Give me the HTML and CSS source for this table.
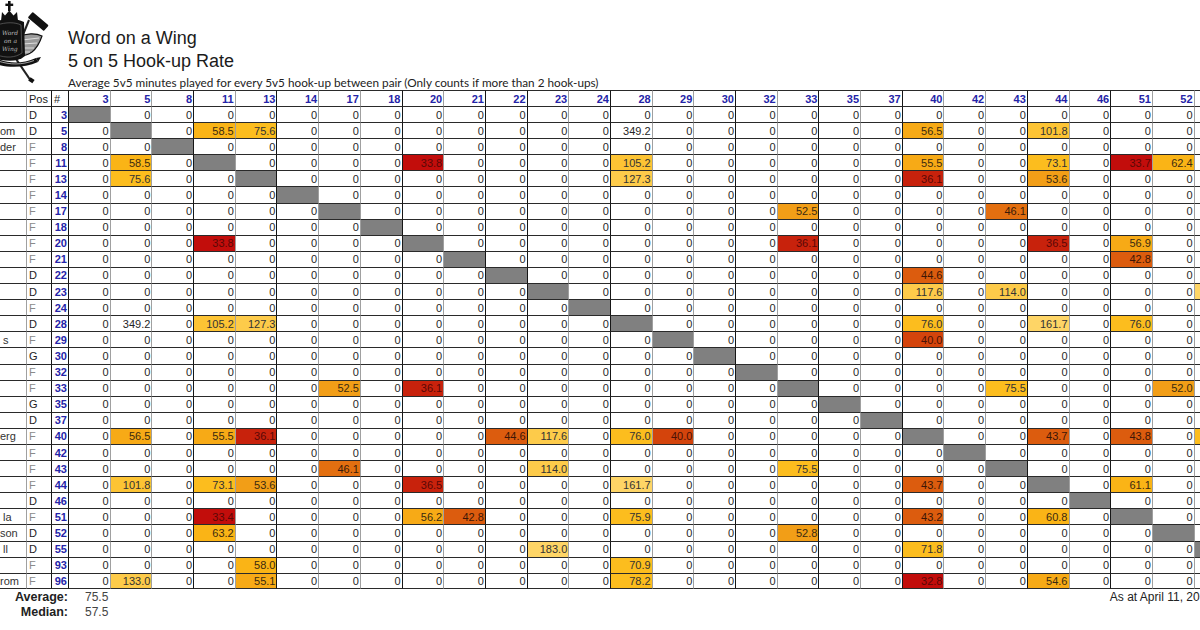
FILE: index.html
```html
<!DOCTYPE html>
<html lang="en">
<head>
<meta charset="utf-8">
<title>Word on a Wing - 5 on 5 Hook-up Rate</title>
<link rel="stylesheet" href="styles.css">
</head>
<body>
<div class="page">
  <header class="head">
    <svg class="logo" viewBox="0 0 50 86" aria-hidden="true">
      <rect x="8" y="1" width="2.6" height="10" fill="#111"/>
      <rect x="5.4" y="3.6" width="7.8" height="2.4" fill="#111"/>
      <path d="M1 21 L2 12 L5 15.5 L9.3 10.5 L13.5 15.5 L17 12 L18 21 Z" fill="#111"/>
      <path d="M29 20 L16 52" stroke="#222" stroke-width="2" fill="none"/>
      <path d="M14 56 L31 81" stroke="#222" stroke-width="2.2" fill="none"/>
      <rect x="29" y="78" width="5" height="4" fill="#111" transform="rotate(35 31 80)"/>
      <g transform="rotate(40 38 21)"><rect x="28" y="17.5" width="21" height="7.5" rx="1" fill="#111"/></g>
      <path d="M19 37 C26 33 36 33 42 36 C40 42 37 48 32 52 C28 55 23 56 19 56 Z" fill="#9a9a9a" stroke="#111" stroke-width="1.2"/>
      <path d="M22 40 L39 38 M22 44 L37 43 M22 48 L34 48 M22 52 L30 52" stroke="#eee" stroke-width="0.8" fill="none"/>
      <path d="M-6 22 C6 18 16 18 24 22 L25 56 C18 62 6 62 -6 58 Z" fill="#111"/>
      <path d="M-3 25 C6 22 15 22 21 25 L22 53 C15 58 6 58 -3 55 Z" fill="none" stroke="#777" stroke-width="0.6"/>
      <text x="2" y="35" class="crest">Word</text>
      <text x="4" y="43" class="crest">on a</text>
      <text x="2" y="51" class="crest">Wing</text>
      <path d="M-4 58 C8 64 22 64 36 58 L38 62 C24 68 8 68 -4 64 Z" fill="#111"/>
      <path d="M-2 61 C10 65 22 65 34 60.5" stroke="#ddd" stroke-width="0.7" fill="none"/>
      <path d="M36 58 L41 57 L38 62 Z" fill="#111"/>
    </svg>
    <div class="titles">
      <div class="t1">Word on a Wing</div>
      <div class="t2">5 on 5 Hook-up Rate</div>
      <div class="sub">Average 5v5 minutes played for every 5v5 hook-up between pair (Only counts if more than 2 hook-ups)</div>
    </div>
  </header>

  <table class="grid">
    <colgroup>
      <col class="c-name"><col class="c-pos"><col class="c-no">
      <col class="c-d"><col class="c-d"><col class="c-d"><col class="c-d"><col class="c-d"><col class="c-d"><col class="c-d"><col class="c-d"><col class="c-d"><col class="c-d"><col class="c-d"><col class="c-d"><col class="c-d"><col class="c-d"><col class="c-d"><col class="c-d"><col class="c-d"><col class="c-d"><col class="c-d"><col class="c-d"><col class="c-d"><col class="c-d"><col class="c-d"><col class="c-d"><col class="c-d"><col class="c-d"><col class="c-d"><col class="c-d">
    </colgroup>
    <tr class="hd"><td class="nm"></td><td class="ps">Pos</td><td class="hs">#</td><td class="hn">3</td><td class="hn">5</td><td class="hn">8</td><td class="hn">11</td><td class="hn">13</td><td class="hn">14</td><td class="hn">17</td><td class="hn">18</td><td class="hn">20</td><td class="hn">21</td><td class="hn">22</td><td class="hn">23</td><td class="hn">24</td><td class="hn">28</td><td class="hn">29</td><td class="hn">30</td><td class="hn">32</td><td class="hn">33</td><td class="hn">35</td><td class="hn">37</td><td class="hn">40</td><td class="hn">42</td><td class="hn">43</td><td class="hn">44</td><td class="hn">46</td><td class="hn">51</td><td class="hn">52</td><td class="hn"></td></tr>
    <tr><td class="nm"></td><td class="ps">D</td><td class="no">3</td><td class="x"></td><td>0</td><td>0</td><td>0</td><td>0</td><td>0</td><td>0</td><td>0</td><td>0</td><td>0</td><td>0</td><td>0</td><td>0</td><td>0</td><td>0</td><td>0</td><td>0</td><td>0</td><td>0</td><td>0</td><td>0</td><td>0</td><td>0</td><td>0</td><td>0</td><td>0</td><td>0</td><td></td></tr>
    <tr><td class="nm">om</td><td class="ps">D</td><td class="no">5</td><td>0</td><td class="x"></td><td>0</td><td class="k8">58.5</td><td class="k9">75.6</td><td>0</td><td>0</td><td>0</td><td>0</td><td>0</td><td>0</td><td>0</td><td>0</td><td>349.2</td><td>0</td><td>0</td><td>0</td><td>0</td><td>0</td><td>0</td><td class="k7">56.5</td><td>0</td><td>0</td><td class="k10">101.8</td><td>0</td><td>0</td><td>0</td><td></td></tr>
    <tr><td class="nm">der</td><td class="ps f">F</td><td class="no">8</td><td>0</td><td>0</td><td class="x"></td><td>0</td><td>0</td><td>0</td><td>0</td><td>0</td><td>0</td><td>0</td><td>0</td><td>0</td><td>0</td><td>0</td><td>0</td><td>0</td><td>0</td><td>0</td><td>0</td><td>0</td><td>0</td><td>0</td><td>0</td><td>0</td><td>0</td><td>0</td><td>0</td><td></td></tr>
    <tr><td class="nm"></td><td class="ps f">F</td><td class="no">11</td><td>0</td><td class="k8">58.5</td><td>0</td><td class="x"></td><td>0</td><td>0</td><td>0</td><td>0</td><td class="k1">33.8</td><td>0</td><td>0</td><td>0</td><td>0</td><td class="k10">105.2</td><td>0</td><td>0</td><td>0</td><td>0</td><td>0</td><td>0</td><td class="k7">55.5</td><td>0</td><td>0</td><td class="k9">73.1</td><td>0</td><td class="k1">33.7</td><td class="k8">62.4</td><td></td></tr>
    <tr><td class="nm"></td><td class="ps f">F</td><td class="no">13</td><td>0</td><td class="k9">75.6</td><td>0</td><td>0</td><td class="x"></td><td>0</td><td>0</td><td>0</td><td>0</td><td>0</td><td>0</td><td>0</td><td>0</td><td class="k11">127.3</td><td>0</td><td>0</td><td>0</td><td>0</td><td>0</td><td>0</td><td class="k2">36.1</td><td>0</td><td>0</td><td class="k6">53.6</td><td>0</td><td>0</td><td>0</td><td></td></tr>
    <tr><td class="nm"></td><td class="ps f">F</td><td class="no">14</td><td>0</td><td>0</td><td>0</td><td>0</td><td>0</td><td class="x"></td><td>0</td><td>0</td><td>0</td><td>0</td><td>0</td><td>0</td><td>0</td><td>0</td><td>0</td><td>0</td><td>0</td><td>0</td><td>0</td><td>0</td><td>0</td><td>0</td><td>0</td><td>0</td><td>0</td><td>0</td><td>0</td><td></td></tr>
    <tr><td class="nm"></td><td class="ps f">F</td><td class="no">17</td><td>0</td><td>0</td><td>0</td><td>0</td><td>0</td><td>0</td><td class="x"></td><td>0</td><td>0</td><td>0</td><td>0</td><td>0</td><td>0</td><td>0</td><td>0</td><td>0</td><td>0</td><td class="k6">52.5</td><td>0</td><td>0</td><td>0</td><td>0</td><td class="k5">46.1</td><td>0</td><td>0</td><td>0</td><td>0</td><td></td></tr>
    <tr><td class="nm"></td><td class="ps f">F</td><td class="no">18</td><td>0</td><td>0</td><td>0</td><td>0</td><td>0</td><td>0</td><td>0</td><td class="x"></td><td>0</td><td>0</td><td>0</td><td>0</td><td>0</td><td>0</td><td>0</td><td>0</td><td>0</td><td>0</td><td>0</td><td>0</td><td>0</td><td>0</td><td>0</td><td>0</td><td>0</td><td>0</td><td>0</td><td></td></tr>
    <tr><td class="nm"></td><td class="ps f">F</td><td class="no">20</td><td>0</td><td>0</td><td>0</td><td class="k1">33.8</td><td>0</td><td>0</td><td>0</td><td>0</td><td class="x"></td><td>0</td><td>0</td><td>0</td><td>0</td><td>0</td><td>0</td><td>0</td><td>0</td><td class="k2">36.1</td><td>0</td><td>0</td><td>0</td><td>0</td><td>0</td><td class="k2">36.5</td><td>0</td><td class="k7">56.9</td><td>0</td><td></td></tr>
    <tr><td class="nm"></td><td class="ps f">F</td><td class="no">21</td><td>0</td><td>0</td><td>0</td><td>0</td><td>0</td><td>0</td><td>0</td><td>0</td><td>0</td><td class="x"></td><td>0</td><td>0</td><td>0</td><td>0</td><td>0</td><td>0</td><td>0</td><td>0</td><td>0</td><td>0</td><td>0</td><td>0</td><td>0</td><td>0</td><td>0</td><td class="k4">42.8</td><td>0</td><td></td></tr>
    <tr><td class="nm"></td><td class="ps">D</td><td class="no">22</td><td>0</td><td>0</td><td>0</td><td>0</td><td>0</td><td>0</td><td>0</td><td>0</td><td>0</td><td>0</td><td class="x"></td><td>0</td><td>0</td><td>0</td><td>0</td><td>0</td><td>0</td><td>0</td><td>0</td><td>0</td><td class="k4">44.6</td><td>0</td><td>0</td><td>0</td><td>0</td><td>0</td><td>0</td><td></td></tr>
    <tr><td class="nm"></td><td class="ps">D</td><td class="no">23</td><td>0</td><td>0</td><td>0</td><td>0</td><td>0</td><td>0</td><td>0</td><td>0</td><td>0</td><td>0</td><td>0</td><td class="x"></td><td>0</td><td>0</td><td>0</td><td>0</td><td>0</td><td>0</td><td>0</td><td>0</td><td class="k11">117.6</td><td>0</td><td class="k11">114.0</td><td>0</td><td>0</td><td>0</td><td>0</td><td class="k12"></td></tr>
    <tr><td class="nm"></td><td class="ps f">F</td><td class="no">24</td><td>0</td><td>0</td><td>0</td><td>0</td><td>0</td><td>0</td><td>0</td><td>0</td><td>0</td><td>0</td><td>0</td><td>0</td><td class="x"></td><td>0</td><td>0</td><td>0</td><td>0</td><td>0</td><td>0</td><td>0</td><td>0</td><td>0</td><td>0</td><td>0</td><td>0</td><td>0</td><td>0</td><td></td></tr>
    <tr><td class="nm"></td><td class="ps">D</td><td class="no">28</td><td>0</td><td>349.2</td><td>0</td><td class="k10">105.2</td><td class="k11">127.3</td><td>0</td><td>0</td><td>0</td><td>0</td><td>0</td><td>0</td><td>0</td><td>0</td><td class="x"></td><td>0</td><td>0</td><td>0</td><td>0</td><td>0</td><td>0</td><td class="k9">76.0</td><td>0</td><td>0</td><td class="k12">161.7</td><td>0</td><td class="k9">76.0</td><td>0</td><td></td></tr>
    <tr><td class="nm n2">s</td><td class="ps f">F</td><td class="no">29</td><td>0</td><td>0</td><td>0</td><td>0</td><td>0</td><td>0</td><td>0</td><td>0</td><td>0</td><td>0</td><td>0</td><td>0</td><td>0</td><td>0</td><td class="x"></td><td>0</td><td>0</td><td>0</td><td>0</td><td>0</td><td class="k3">40.0</td><td>0</td><td>0</td><td>0</td><td>0</td><td>0</td><td>0</td><td></td></tr>
    <tr><td class="nm"></td><td class="ps">G</td><td class="no">30</td><td>0</td><td>0</td><td>0</td><td>0</td><td>0</td><td>0</td><td>0</td><td>0</td><td>0</td><td>0</td><td>0</td><td>0</td><td>0</td><td>0</td><td>0</td><td class="x"></td><td>0</td><td>0</td><td>0</td><td>0</td><td>0</td><td>0</td><td>0</td><td>0</td><td>0</td><td>0</td><td>0</td><td></td></tr>
    <tr><td class="nm"></td><td class="ps f">F</td><td class="no">32</td><td>0</td><td>0</td><td>0</td><td>0</td><td>0</td><td>0</td><td>0</td><td>0</td><td>0</td><td>0</td><td>0</td><td>0</td><td>0</td><td>0</td><td>0</td><td>0</td><td class="x"></td><td>0</td><td>0</td><td>0</td><td>0</td><td>0</td><td>0</td><td>0</td><td>0</td><td>0</td><td>0</td><td></td></tr>
    <tr><td class="nm"></td><td class="ps f">F</td><td class="no">33</td><td>0</td><td>0</td><td>0</td><td>0</td><td>0</td><td>0</td><td class="k6">52.5</td><td>0</td><td class="k2">36.1</td><td>0</td><td>0</td><td>0</td><td>0</td><td>0</td><td>0</td><td>0</td><td>0</td><td class="x"></td><td>0</td><td>0</td><td>0</td><td>0</td><td class="k9">75.5</td><td>0</td><td>0</td><td>0</td><td class="k6">52.0</td><td></td></tr>
    <tr><td class="nm"></td><td class="ps">G</td><td class="no">35</td><td>0</td><td>0</td><td>0</td><td>0</td><td>0</td><td>0</td><td>0</td><td>0</td><td>0</td><td>0</td><td>0</td><td>0</td><td>0</td><td>0</td><td>0</td><td>0</td><td>0</td><td>0</td><td class="x"></td><td>0</td><td>0</td><td>0</td><td>0</td><td>0</td><td>0</td><td>0</td><td>0</td><td></td></tr>
    <tr><td class="nm"></td><td class="ps">D</td><td class="no">37</td><td>0</td><td>0</td><td>0</td><td>0</td><td>0</td><td>0</td><td>0</td><td>0</td><td>0</td><td>0</td><td>0</td><td>0</td><td>0</td><td>0</td><td>0</td><td>0</td><td>0</td><td>0</td><td>0</td><td class="x"></td><td>0</td><td>0</td><td>0</td><td>0</td><td>0</td><td>0</td><td>0</td><td></td></tr>
    <tr><td class="nm">erg</td><td class="ps f">F</td><td class="no">40</td><td>0</td><td class="k7">56.5</td><td>0</td><td class="k7">55.5</td><td class="k2">36.1</td><td>0</td><td>0</td><td>0</td><td>0</td><td>0</td><td class="k4">44.6</td><td class="k11">117.6</td><td>0</td><td class="k9">76.0</td><td class="k3">40.0</td><td>0</td><td>0</td><td>0</td><td>0</td><td>0</td><td class="x"></td><td>0</td><td>0</td><td class="k4">43.7</td><td>0</td><td class="k4">43.8</td><td>0</td><td class="k9"></td></tr>
    <tr><td class="nm"></td><td class="ps f">F</td><td class="no">42</td><td>0</td><td>0</td><td>0</td><td>0</td><td>0</td><td>0</td><td>0</td><td>0</td><td>0</td><td>0</td><td>0</td><td>0</td><td>0</td><td>0</td><td>0</td><td>0</td><td>0</td><td>0</td><td>0</td><td>0</td><td>0</td><td class="x"></td><td>0</td><td>0</td><td>0</td><td>0</td><td>0</td><td></td></tr>
    <tr><td class="nm"></td><td class="ps f">F</td><td class="no">43</td><td>0</td><td>0</td><td>0</td><td>0</td><td>0</td><td>0</td><td class="k5">46.1</td><td>0</td><td>0</td><td>0</td><td>0</td><td class="k11">114.0</td><td>0</td><td>0</td><td>0</td><td>0</td><td>0</td><td class="k9">75.5</td><td>0</td><td>0</td><td>0</td><td>0</td><td class="x"></td><td>0</td><td>0</td><td>0</td><td>0</td><td></td></tr>
    <tr><td class="nm"></td><td class="ps f">F</td><td class="no">44</td><td>0</td><td class="k10">101.8</td><td>0</td><td class="k9">73.1</td><td class="k6">53.6</td><td>0</td><td>0</td><td>0</td><td class="k2">36.5</td><td>0</td><td>0</td><td>0</td><td>0</td><td class="k12">161.7</td><td>0</td><td>0</td><td>0</td><td>0</td><td>0</td><td>0</td><td class="k4">43.7</td><td>0</td><td>0</td><td class="x"></td><td>0</td><td class="k8">61.1</td><td>0</td><td></td></tr>
    <tr><td class="nm"></td><td class="ps">D</td><td class="no">46</td><td>0</td><td>0</td><td>0</td><td>0</td><td>0</td><td>0</td><td>0</td><td>0</td><td>0</td><td>0</td><td>0</td><td>0</td><td>0</td><td>0</td><td>0</td><td>0</td><td>0</td><td>0</td><td>0</td><td>0</td><td>0</td><td>0</td><td>0</td><td>0</td><td class="x"></td><td>0</td><td>0</td><td></td></tr>
    <tr><td class="nm n2">la</td><td class="ps f">F</td><td class="no">51</td><td>0</td><td>0</td><td>0</td><td class="k1">33.4</td><td>0</td><td>0</td><td>0</td><td>0</td><td class="k7">56.2</td><td class="k4">42.8</td><td>0</td><td>0</td><td>0</td><td class="k9">75.9</td><td>0</td><td>0</td><td>0</td><td>0</td><td>0</td><td>0</td><td class="k4">43.2</td><td>0</td><td>0</td><td class="k8">60.8</td><td>0</td><td class="x"></td><td>0</td><td></td></tr>
    <tr><td class="nm">son</td><td class="ps">D</td><td class="no">52</td><td>0</td><td>0</td><td>0</td><td class="k8">63.2</td><td>0</td><td>0</td><td>0</td><td>0</td><td>0</td><td>0</td><td>0</td><td>0</td><td>0</td><td>0</td><td>0</td><td>0</td><td>0</td><td class="k6">52.8</td><td>0</td><td>0</td><td>0</td><td>0</td><td>0</td><td>0</td><td>0</td><td>0</td><td class="x"></td><td></td></tr>
    <tr><td class="nm n2">ll</td><td class="ps">D</td><td class="no">55</td><td>0</td><td>0</td><td>0</td><td>0</td><td>0</td><td>0</td><td>0</td><td>0</td><td>0</td><td>0</td><td>0</td><td class="k12">183.0</td><td>0</td><td>0</td><td>0</td><td>0</td><td>0</td><td>0</td><td>0</td><td>0</td><td class="k9">71.8</td><td>0</td><td>0</td><td>0</td><td>0</td><td>0</td><td>0</td><td class="x"></td></tr>
    <tr><td class="nm"></td><td class="ps f">F</td><td class="no">93</td><td>0</td><td>0</td><td>0</td><td>0</td><td class="k8">58.0</td><td>0</td><td>0</td><td>0</td><td>0</td><td>0</td><td>0</td><td>0</td><td>0</td><td class="k9">70.9</td><td>0</td><td>0</td><td>0</td><td>0</td><td>0</td><td>0</td><td>0</td><td>0</td><td>0</td><td>0</td><td>0</td><td>0</td><td>0</td><td></td></tr>
    <tr class="last"><td class="nm">rom</td><td class="ps f">F</td><td class="no">96</td><td>0</td><td class="k11">133.0</td><td>0</td><td>0</td><td class="k7">55.1</td><td>0</td><td>0</td><td>0</td><td>0</td><td>0</td><td>0</td><td>0</td><td>0</td><td class="k9">78.2</td><td>0</td><td>0</td><td>0</td><td>0</td><td>0</td><td>0</td><td class="k1">32.8</td><td>0</td><td>0</td><td class="k7">54.6</td><td>0</td><td>0</td><td>0</td><td></td></tr>
  </table>

  <footer class="foot">
    <div class="stats">
      <div class="lbl">Average:</div><div class="val">75.5</div>
      <div class="lbl">Median:</div><div class="val">57.5</div>
    </div>
    <div class="date">As at April 11, 2010</div>
  </footer>
</div>
</body>
</html>
```

FILE: styles.css
```css
html, body {
  margin: 0;
  padding: 0;
  background: #fff;
}
body {
  width: 1200px;
  height: 630px;
  overflow: hidden;
  font-family: "Liberation Sans", Arial, sans-serif;
  color: #222;
}
.page {
  width: 1240px;
}

/* header */
.head {
  display: flex;
  height: 90px;
}
.logo {
  flex: none;
  width: 50px;
  height: 86px;
  margin-right: 18px;
}
.crest {
  font-family: "DejaVu Serif", serif;
  font-style: italic;
  font-size: 6px;
  fill: #bdbdbd;
}
.titles {
  padding-top: 27px;
}
.t1, .t2 {
  font-size: 18px;
  line-height: 23px;
  color: #1b1b1b;
}
.sub {
  margin-top: 3px;
  font-family: Lato, "Open Sans", sans-serif;
  font-size: 11.75px;
  line-height: 13px;
  color: #222;
  white-space: nowrap;
}

/* grid */
.grid {
  border-collapse: separate;
  border-spacing: 0;
  table-layout: fixed;
  width: 1235.6px;
  font-size: 11px;
}
.c-name { width: 26px; }
.c-pos { width: 25px; }
.c-no { width: 17px; }
.c-d { width: 41.7px; }

.grid tr { height: 16.1px; }
.grid tr.hd { height: 16px; }

.grid td {
  padding: 0 1px 0 0;
  line-height: 14px;
  text-align: right;
  white-space: nowrap;
  overflow: hidden;
  border-top: 1px solid #2a2a2a;
  border-left: 1px solid #a0a0a0;
  color: #262626;
}
.grid tr.last td {
  border-bottom: 1px solid #2a2a2a;
}
.grid td:nth-child(3),
.grid td:nth-child(4),
.grid td:nth-child(7),
.grid td:nth-child(9),
.grid td:nth-child(12),
.grid td:nth-child(14),
.grid td:nth-child(15),
.grid td:nth-child(17),
.grid td:nth-child(20),
.grid td:nth-child(22),
.grid td:nth-child(24),
.grid td:nth-child(27),
.grid td:nth-child(29) {
  border-left-color: #161616;
}

.grid td.nm {
  border-left: none;
  text-align: left;
  padding: 0;
  color: #333;
}
.grid td.nm.n2 { padding-left: 3px; }
.grid td.ps {
  text-align: left;
  padding-left: 2px;
  color: #222;
}
.grid td.ps.f { color: #8a8a8a; }
.grid td.hs {
  text-align: left;
  padding-left: 2px;
}
.grid td.no,
.grid td.hn {
  font-weight: bold;
  color: #2424a8;
}

.grid td.x { background: #808080; }

.grid td.k1  { background: #c20d0b; color: #5a0806; }
.grid td.k2  { background: #c8220c; color: #5a0806; }
.grid td.k3  { background: #d4440c; color: #4a1206; }
.grid td.k4  { background: #dc5c0e; color: #3e1606; }
.grid td.k5  { background: #e36f10; color: #3a1a08; }
.grid td.k6  { background: #f29e17; color: #3a2a10; }
.grid td.k7  { background: #f7aa16; color: #3a2a10; }
.grid td.k8  { background: #fab416; color: #3a2a10; }
.grid td.k9  { background: #fcbd1e; color: #333; }
.grid td.k10 { background: #fdc434; color: #333; }
.grid td.k11 { background: #fdcb4a; color: #333; }
.grid td.k12 { background: #fed566; color: #333; }

/* footer */
.foot {
  display: flex;
  width: 1213px;
  margin-top: 1px;
}
.stats {
  display: grid;
  grid-template-columns: 68px auto;
  column-gap: 17px;
  line-height: 15px;
}
.lbl {
  text-align: right;
  font-weight: bold;
  font-size: 12.5px;
  color: #222;
}
.val {
  font-size: 12px;
  color: #444;
}
.date {
  margin-left: auto;
  font-size: 12px;
  line-height: 15px;
  white-space: nowrap;
  color: #222;
}
```
